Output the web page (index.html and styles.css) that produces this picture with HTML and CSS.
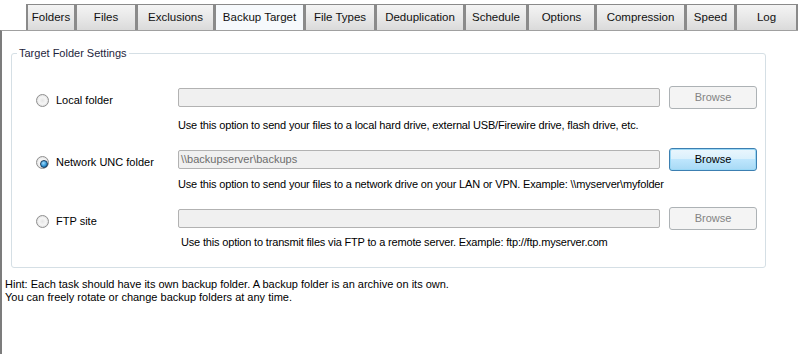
FILE: index.html
```html
<!DOCTYPE html>
<html lang="en">
  <head>
    <meta charset="UTF-8" />
    <title>Backup Target</title>
    <link rel="stylesheet" href="styles.css">
  </head>
  <body>
    <div class="tabs">
      <div class="tab">Folders</div>
      <div class="tab">Files</div>
      <div class="tab">Exclusions</div>
      <div class="tab tab-active">Backup Target</div>
      <div class="tab">File Types</div>
      <div class="tab">Deduplication</div>
      <div class="tab">Schedule</div>
      <div class="tab">Options</div>
      <div class="tab">Compression</div>
      <div class="tab">Speed</div>
      <div class="tab">Log</div>
    </div>

    <div class="pane">
      <fieldset class="group">
        <legend>Target Folder Settings</legend>

        <div class="option">
          <label class="radio"><span class="radio-dot"></span>Local folder</label>
          <div class="field"></div>
          <button class="browse" disabled>Browse</button>
          <p class="desc">Use this option to send your files to a local hard drive, external USB/Firewire drive, flash drive, etc.</p>
        </div>

        <div class="option">
          <label class="radio"><span class="radio-dot radio-checked"></span>Network UNC folder</label>
          <div class="field">\\backupserver\backups</div>
          <button class="browse browse-default">Browse</button>
          <p class="desc desc-unc">Use this option to send your files to a network drive on your LAN or VPN. Example: \\myserver\myfolder</p>
        </div>

        <div class="option">
          <label class="radio"><span class="radio-dot"></span>FTP site</label>
          <div class="field"></div>
          <button class="browse" disabled>Browse</button>
          <p class="desc desc-ftp">Use this option to transmit files via FTP to a remote server. Example: ftp://ftp.myserver.com</p>
        </div>
      </fieldset>

      <p class="hint">
        Hint: Each task should have its own backup folder. A backup folder is an archive on its own.<br>
        You can freely rotate or change backup folders at any time.
      </p>
    </div>
  </body>
</html>
```

FILE: styles.css
```css
* {
  margin: 0;
  padding: 0;
  box-sizing: border-box;
}

body {
  font-family: "Liberation Sans", Arial, sans-serif;
  font-size: 11px;
  line-height: 13px;
  color: #000;
  background: #fff;
  width: 798px;
  height: 354px;
  overflow: hidden;
}

/* Tab strip */
.tabs {
  display: grid;
  grid-template-columns: 49px 61px 78px 90px 71px 89px 63px 68px 90px 50px 63px;
  height: 30px;
  padding: 4px 0 0 26px;
}

.tab {
  border: 1px solid #8a8a8a;
  border-left-width: 2px;
  border-bottom: none;
  background: linear-gradient(#f4f4f4, #e8e8e8 50%, #dadada);
  text-align: center;
  font-size: 11.5px;
  line-height: 25px;
  color: #111;
}

.tab:last-child {
  border-right: 2px solid #8a8a8a;
}

.tab-active {
  background: #f6f9fc;
}

/* Page body */
.pane {
  height: 324px;
  border-top: 1px solid #a0a0a0;
  border-left: 2px solid #7c7c7c;
  padding: 16px 0 0 3px;
}

.group {
  width: 755px;
  margin-left: 6px;
  border: 1px solid #d5dfe5;
  border-radius: 3px;
  padding: 26px 8px 18px 24px;
}

.group legend {
  margin-left: -19px;
  padding: 0 2px;
  color: #1e1e3c;
}

.option {
  display: grid;
  grid-template-columns: 133px 1fr 88px;
  column-gap: 9px;
  align-items: center;
  margin-bottom: 16px;
}

.option:last-child {
  margin-bottom: 0;
}

.radio {
  display: flex;
  align-items: center;
  gap: 7px;
  padding-top: 6px;
}

.radio-dot {
  width: 13px;
  height: 13px;
  border-radius: 50%;
  border: 1px solid #8f8f8f;
  background: radial-gradient(circle at 50% 50%, #e6e6e6 0, #f6f6f6 45%, #cfcfcf 100%);
  position: relative;
}

.radio-checked::after {
  content: "";
  position: absolute;
  left: 2.5px;
  top: 2.5px;
  width: 6px;
  height: 6px;
  border-radius: 50%;
  border: 1px solid #1b3d5f;
  background: radial-gradient(circle at 40% 35%, #9fdcff, #2a8fd0 60%, #0d4f86);
}

.field {
  height: 19px;
  border: 1px solid #b2b2b2;
  border-radius: 2px;
  background: #f0f0f0;
  color: #6d6d6d;
  padding-left: 2px;
  line-height: 17px;
}

.browse {
  height: 23px;
  font: inherit;
  border: 1px solid #707070;
  border-radius: 3px;
  background: linear-gradient(#f2f2f2, #ebebeb 50%, #dddddd 50%, #cfcfcf);
  color: #000;
}

.browse:disabled {
  border-color: #adb2b5;
  background: #f4f4f4;
  color: #838383;
}

.browse-default {
  border-color: #3c7fb1;
  background: linear-gradient(#eaf6fd, #d9f0fc 50%, #bee6fd 50%, #a7d9f5);
  box-shadow: inset 0 0 0 1px #9ad8f6;
}

.desc {
  grid-column: 2 / 4;
  margin-top: 10px;
  letter-spacing: -0.17px;
}

.desc-unc {
  margin-top: 7px;
}

.desc-ftp {
  margin-top: 6px;
  padding-left: 3px;
}

.hint {
  margin-top: 10px;
}
```
